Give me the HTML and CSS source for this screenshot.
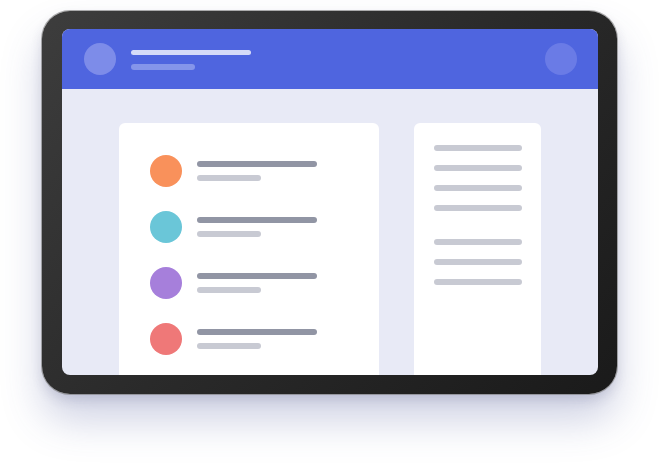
FILE: index.html
```html
<!DOCTYPE html>
<html>
<head>
<meta charset="utf-8">
<link rel="stylesheet" href="styles.css">
</head>
<body>
<div class="stage">
  <div class="device">
    <div class="screen">
      <div class="header">
        <div class="avatar"></div>
        <div class="title">
          <div class="title-line"></div>
          <div class="sub-line"></div>
        </div>
        <div class="action"></div>
      </div>
      <div class="content">
        <div class="card list-card">
          <div class="item"><div class="dot orange"></div><div class="texts"><div class="l1"></div><div class="l2"></div></div></div>
          <div class="item"><div class="dot cyan"></div><div class="texts"><div class="l1"></div><div class="l2"></div></div></div>
          <div class="item"><div class="dot purple"></div><div class="texts"><div class="l1"></div><div class="l2"></div></div></div>
          <div class="item"><div class="dot red"></div><div class="texts"><div class="l1"></div><div class="l2"></div></div></div>
        </div>
        <div class="card side-card">
          <div class="group">
            <div class="bar"></div><div class="bar"></div><div class="bar"></div><div class="bar"></div>
          </div>
          <div class="group">
            <div class="bar"></div><div class="bar"></div><div class="bar"></div>
          </div>
        </div>
      </div>
    </div>
  </div>
</div>
</body>
</html>
```
FILE: styles.css
```css
html, body {
  margin: 0;
  padding: 0;
  background: #ffffff;
  font-family: "Liberation Sans", Arial, sans-serif;
}
.stage {
  width: 659px;
  height: 466px;
  padding: 11px 0 0 42px;
  box-sizing: border-box;
  overflow: hidden;
}
.device {
  width: 575px;
  height: 383px;
  box-sizing: border-box;
  padding: 18px 19px 19px 20px;
  border-radius: 28px;
  background: linear-gradient(135deg, #3d3d3d 0%, #2a2a2a 50%, #1a1a1a 100%);
  box-shadow: 0 0 0 1px rgba(120,120,120,0.6), 0 26px 40px rgba(70, 80, 150, 0.26), 0 6px 12px rgba(60, 60, 100, 0.16);
}
.screen {
  width: 536px;
  height: 346px;
  border-radius: 8px;
  overflow: hidden;
  background: #e8eaf6;
  display: flex;
  flex-direction: column;
}
.header {
  height: 60px;
  flex: none;
  background: #4f65df;
  display: flex;
  align-items: center;
  padding: 0 21px 0 22px;
}
.avatar {
  width: 32px;
  height: 32px;
  border-radius: 50%;
  background: #7d8ce9;
  flex: none;
}
.title {
  margin-left: 15px;
  flex: 1;
  display: flex;
  flex-direction: column;
  padding-top: 2px;
}
.title-line {
  width: 120px;
  height: 5px;
  border-radius: 3px;
  background: #d6dbf8;
}
.sub-line {
  width: 64px;
  height: 6px;
  margin-top: 9px;
  border-radius: 3px;
  background: #8595ea;
}
.action {
  width: 32px;
  height: 32px;
  border-radius: 50%;
  background: #6a7be6;
  flex: none;
}
.content {
  flex: 1;
  display: flex;
  gap: 35px;
  padding: 34px 57px 0;
}
.card {
  background: #ffffff;
  border-radius: 6px 6px 0 0;
  box-sizing: border-box;
}
.list-card {
  width: 260px;
  padding: 32px 31px 0;
  display: flex;
  flex-direction: column;
  gap: 24px;
}
.item {
  display: flex;
  align-items: center;
}
.dot {
  width: 32px;
  height: 32px;
  border-radius: 50%;
  flex: none;
}
.orange { background: #f9915b; }
.cyan { background: #6ac6d8; }
.purple { background: #a67fdb; }
.red { background: #ef7878; }
.texts {
  margin-left: 15px;
  display: flex;
  flex-direction: column;
}
.l1 {
  width: 120px;
  height: 6px;
  border-radius: 3px;
  background: #9195a4;
}
.l2 {
  width: 64px;
  height: 6px;
  margin-top: 8px;
  border-radius: 3px;
  background: #c8cad3;
}
.side-card {
  width: 127px;
  padding: 22px 19px 0 20px;
  display: flex;
  flex-direction: column;
  gap: 28px;
}
.group {
  display: flex;
  flex-direction: column;
  gap: 14px;
}
.bar {
  width: 88px;
  height: 6px;
  border-radius: 3px;
  background: #c8cad3;
}
```
